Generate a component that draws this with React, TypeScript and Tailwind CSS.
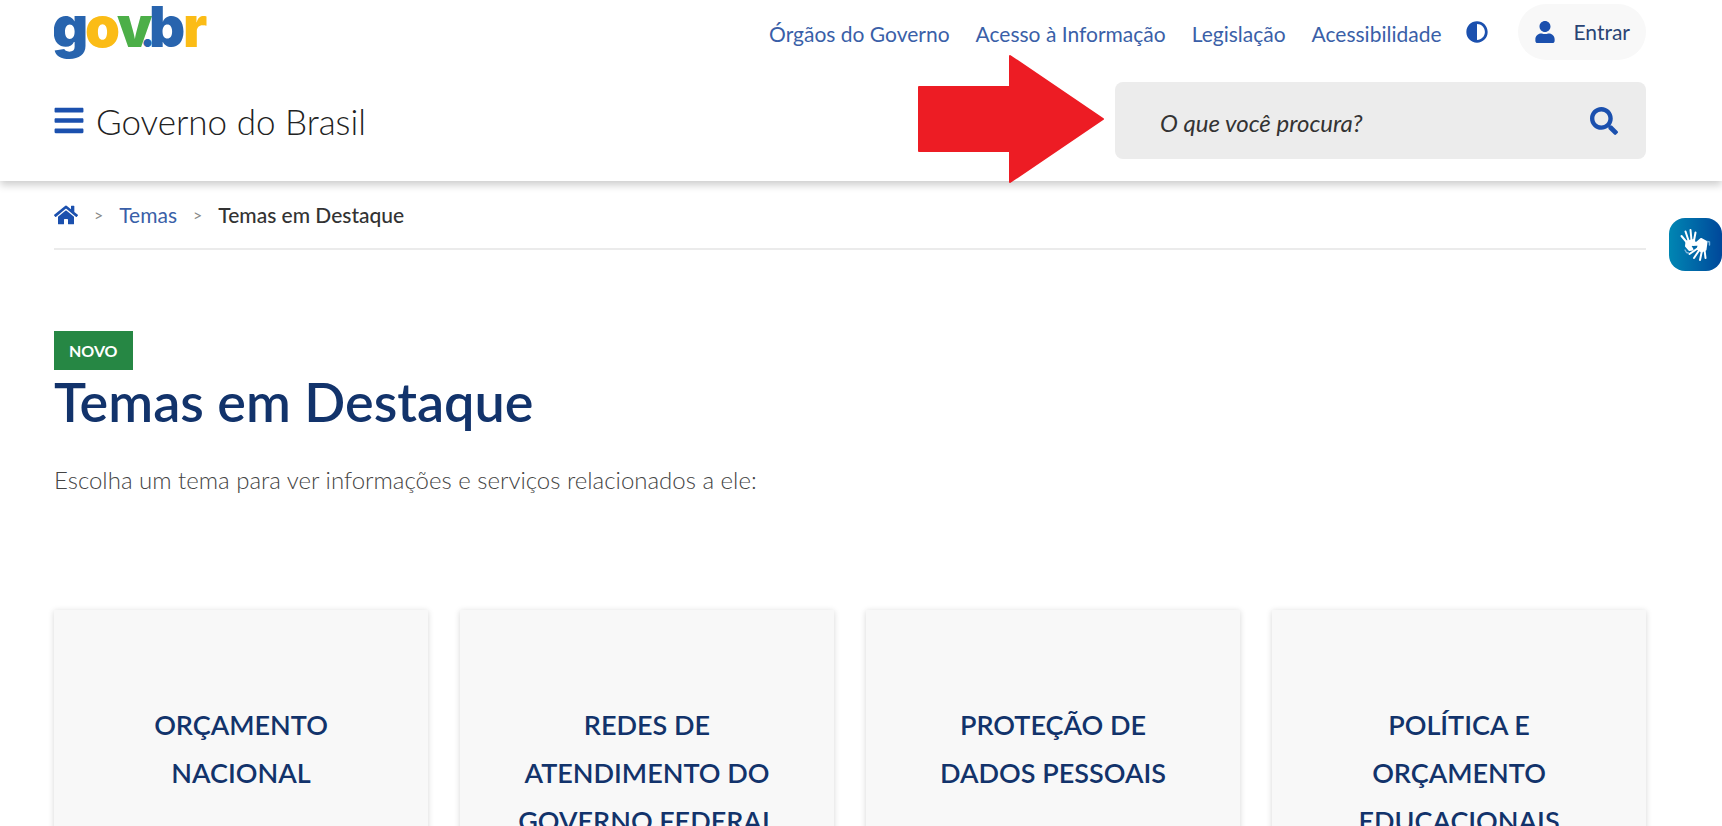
import { FaAdjust, FaBars, FaHome, FaSearch, FaUser } from "react-icons/fa";

interface Theme {
  title: string;
  href: string;
}

const navLinks = ["Órgãos do Governo", "Acesso à Informação", "Legislação", "Acessibilidade"];

const themes: Theme[] = [
  { title: "Orçamento Nacional", href: "#orcamento" },
  { title: "Redes de Atendimento do Governo Federal", href: "#redes" },
  { title: "Proteção de Dados Pessoais", href: "#dados" },
  { title: "Política e Orçamento Educacionais", href: "#educacao" },
];

function Logo() {
  return (
    <svg
      viewBox="0 0 156 60"
      className="w-[156px] h-[60px]"
      fontFamily="Inter, sans-serif"
      fontSize="56"
      fontWeight="900"
      role="img"
      aria-label="gov.br"
    >
      <text y="45">
        <tspan x="-2" fill="#2864ae">g</tspan>
        <tspan x="31" fill="#fbbc16">o</tspan>
        <tspan x="63" fill="#4caf48">v</tspan>
        <tspan x="86" fill="#2864ae" fontSize="40">.</tspan>
        <tspan x="95" fill="#2864ae">b</tspan>
        <tspan x="129" fill="#fbbc16">r</tspan>
      </text>
    </svg>
  );
}

function HandsIcon() {
  return (
    <svg viewBox="0 0 53 53" className="w-[53px] h-[53px]" fill="none" strokeLinecap="round" strokeLinejoin="round">
      {/* Open hand, fingers up */}
      <g stroke="#fff" strokeWidth="2">
        <path d="M17.5 24L12.5 18M19.5 22.5L16.5 13.5M22.5 22.5L21.5 12M25 22.5L26.5 14.5" />
        <path d="M17.5 23.5l7.5-1.5.5 3-4 3 2 3.5-3 .5-3.5-4z" fill="#fff" />
      </g>
      {/* Second hand, fingers down */}
      <g stroke="#fff" strokeWidth="2">
        <path d="M28.5 30.5L20.5 36M30 32.5L25 40M33 32.5L31 42M35.5 31.5L36.5 40" />
        <path d="M23 25.5l5-1 4-3.5 5.5 3-1 7.5-4 2-4-2.5 1.5-4.5-6 .5z" fill="#fff" />
      </g>
      <path d="M38.5 23.5l2 .5v3M16 32l1.5 2.5 2 .5" stroke="#7fb6dc" strokeWidth="1.4" />
    </svg>
  );
}

function Arrow() {
  return (
    <svg
      viewBox="0 0 186 128"
      className="absolute right-full bottom-[-24px] z-10 mr-[11px] w-[186px] h-[128px]"
      aria-hidden="true"
    >
      <path
        d="M1 32H92V1L185 64L92 127V96H1Z"
        fill="#ed1c24"
        stroke="#ed1c24"
        strokeWidth="2"
        strokeLinejoin="round"
      />
    </svg>
  );
}

function Header() {
  return (
    <header className="relative bg-white pl-[54px] pr-[76px] pt-1 pb-[22px] shadow-[0_4px_8px_rgba(0,0,0,0.2)]">
      <div className="flex h-14 items-center justify-between">
        <a href="#inicio">
          <Logo />
        </a>
        <div className="flex items-center">
          <nav className="flex gap-[26px] pt-1 text-[21px] leading-7 text-[#3a5fa8]">
            {navLinks.map((label) => (
              <a key={label} href="#menu" className="hover:underline">
                {label}
              </a>
            ))}
          </nav>
          <button type="button" aria-label="Alto contraste" className="ml-6 text-[22px] text-[#1b50ae]">
            <FaAdjust />
          </button>
          <button
            type="button"
            className="ml-[30px] flex h-14 items-center gap-[18px] rounded-full bg-[#f8f8f8] px-4 text-[21px] text-[#2a4474]"
          >
            <FaUser className="text-[22px] text-[#1b50ae]" />
            Entrar
          </button>
        </div>
      </div>

      <div className="mt-[22px] flex items-center justify-between">
        <div className="flex items-center gap-3">
          <button type="button" aria-label="Abrir menu" className="text-[#1b50ae]">
            <FaBars className="h-[33px] w-[30px]" />
          </button>
          <span className="text-[35px] font-light leading-10 text-[#222]">Governo do Brasil</span>
        </div>
        <form role="search" className="relative flex h-[77px] w-[531px] items-center rounded-lg bg-[#ececec] pl-[45px] pr-7">
          <Arrow />
          <input
            type="text"
            aria-label="O que você procura?"
            placeholder="O que você procura?"
            className="min-w-0 flex-1 bg-transparent pt-1 text-[24px] italic text-[#333] outline-none placeholder:text-[#333]"
          />
          <button type="submit" aria-label="Buscar" className="text-[28px] text-[#1b50ae]">
            <FaSearch />
          </button>
        </form>
      </div>
    </header>
  );
}

export default function App() {
  return (
    <div className="min-h-screen bg-white font-[Lato,sans-serif]">
      <Header />

      <main className="pl-[54px] pr-[76px]">
        <nav
          aria-label="Trilha de navegação"
          className="flex h-[69px] items-center gap-4 border-b-2 border-[#ebebeb] text-[21px] text-[#333]"
        >
          <a href="#inicio" aria-label="Página inicial" className="text-[24px] text-[#1b50ae]">
            <FaHome />
          </a>
          <span className="text-base text-[#888]">&gt;</span>
          <a href="#temas" className="text-[#3a5fa8]">
            Temas
          </a>
          <span className="text-base text-[#888]">&gt;</span>
          <span className="font-medium" aria-current="page">
            Temas em Destaque
          </span>
        </nav>

        <section className="pt-[81px]">
          <span className="inline-flex h-[39px] items-center bg-[#268744] px-[15px] text-base font-bold text-white">
            NOVO
          </span>
          <h1 className="text-[54px] font-semibold leading-[64px] text-[#12336b]">Temas em Destaque</h1>
          <p className="mt-[30px] text-[24px] font-light leading-8 text-[#444]">
            Escolha um tema para ver informações e serviços relacionados a ele:
          </p>
        </section>

        <section className="mt-[114px] grid grid-cols-4 gap-8">
          {themes.map((theme) => (
            <a
              key={theme.title}
              href={theme.href}
              className="bg-[#f8f8f8] px-12 py-[91px] text-center text-[27px] font-semibold uppercase leading-[48px] text-[#12336b] shadow-[0_1px_6px_rgba(0,0,0,0.16)]"
            >
              {theme.title}
            </a>
          ))}
        </section>
      </main>

      <button
        type="button"
        aria-label="Conteúdo acessível em Libras"
        className="fixed right-0 top-[218px] rounded-2xl bg-linear-to-r from-[#0086b3] to-[#00479a]"
      >
        <HandsIcon />
      </button>
    </div>
  );
}
